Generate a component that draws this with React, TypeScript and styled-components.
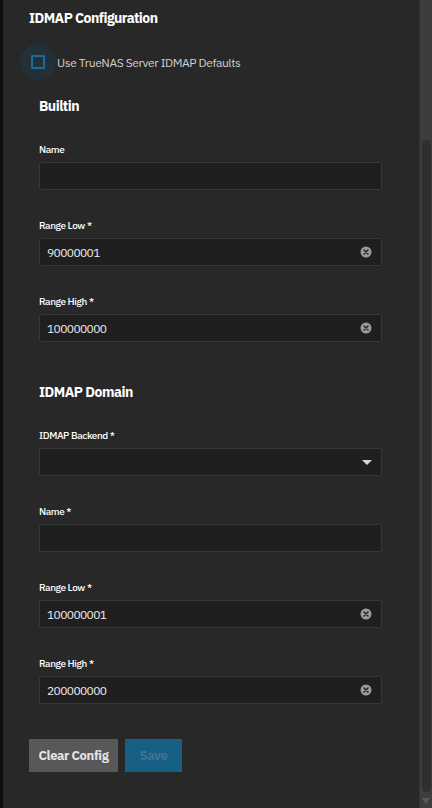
import React from "react";
import styled, { createGlobalStyle } from "styled-components";

const Global = createGlobalStyle`
  html, body { margin: 0; padding: 0; background: #282828; }
  body { font-family: "IBM Plex Sans", Roboto, "Noto Sans", sans-serif; }
  * { box-sizing: border-box; }
`;

const Page = styled.div`
  display: flex;
  width: 432px;
  height: 808px;
  background: #282828;
  border-left: 3px solid #0e0e0e;
  overflow: hidden;
`;

const Content = styled.div`
  flex: 1;
  padding: 8px 0 0 26px;
  display: flex;
  flex-direction: column;
`;

const Title = styled.h2`
  margin: 0;
  font-size: 14px;
  line-height: 20px;
  font-weight: 700;
  color: #ffffff;
  letter-spacing: -0.55px;
`;

const CheckRow = styled.label`
  display: flex;
  align-items: center;
  height: 36px;
  margin: 16px 0 16px -9px;
  gap: 1px;
`;

const Ripple = styled.span`
  width: 36px;
  height: 36px;
  border-radius: 50%;
  background: #233038;
  display: flex;
  align-items: center;
  justify-content: center;
`;

const Box = styled.span`
  width: 14px;
  height: 14px;
  border: 2px solid #1a6a9a;
  border-radius: 1px;
`;

const CheckText = styled.span`
  font-size: 12px;
  color: #d0d0d0;
  letter-spacing: -0.4px;
`;

const Section = styled.section<{ $top?: number }>`
  padding-left: 10px;
  width: 362px;
  margin-top: ${(p) => p.$top ?? 0}px;
`;

const SectionTitle = styled.h3`
  margin: 0 0 27px;
  font-size: 14px;
  line-height: 20px;
  font-weight: 700;
  color: #ffffff;
  letter-spacing: -0.5px;
`;

const Field = styled.div`
  margin-bottom: 29px;
`;

const Label = styled.div`
  font-size: 10px;
  line-height: 14px;
  font-weight: 500;
  color: #ffffff;
  letter-spacing: -0.4px;
  margin-bottom: 5px;
`;

const InputBox = styled.div`
  height: 28px;
  width: 343px;
  background: #1f1f1f;
  border: 1px solid #373737;
  border-radius: 2px;
  display: flex;
  align-items: center;
  padding: 0 9px 0 7px;
`;

const Value = styled.span`
  flex: 1;
  font-size: 12px;
  color: #ececec;
  letter-spacing: -0.6px;
`;

const ClearIcon = () => (
  <svg width="12" height="12" viewBox="0 0 12 12">
    <circle cx="6" cy="6" r="5.5" fill="#9b9b9b" />
    <path d="M4 4 L8 8 M8 4 L4 8" stroke="#1f1f1f" strokeWidth="1.4" strokeLinecap="round" />
  </svg>
);

const Arrow = () => (
  <svg width="10" height="5" viewBox="0 0 10 5">
    <path d="M0 0 H10 L5 5 Z" fill="#d8d8d8" />
  </svg>
);

const Buttons = styled.div`
  display: flex;
  gap: 7px;
  margin-top: 6px;
`;

const Button = styled.button<{ $primary?: boolean }>`
  height: 33px;
  padding: 0;
  border: none;
  border-radius: 0;
  white-space: nowrap;
  font-family: inherit;
  font-size: 13px;
  font-weight: 700;
  letter-spacing: -0.4px;
  background: ${(p) => (p.$primary ? "#175f85" : "#585858")};
  color: ${(p) => (p.$primary ? "#3f7490" : "#e4e4e4")};
  width: ${(p) => (p.$primary ? "57px" : "89px")};
`;

const Scrollbar = styled.div`
  width: 13px;
  background: #3d3d3d;
  border-left: 1px solid #333;
  display: flex;
  flex-direction: column;
  align-items: center;
  padding: 140px 0 4px;
`;

const Thumb = styled.div`
  width: 9px;
  flex: 1;
  margin-left: 1px;
  background: #2f2f2f;
  border-radius: 5px;
`;

const ScrollArrow = styled.div`
  margin-top: 6px;
  width: 0;
  height: 0;
  border-left: 4px solid transparent;
  border-right: 4px solid transparent;
  border-top: 6px solid #5a5a5a;
`;

type F = { label: string; value?: string; kind?: "clear" | "select" };

const Input = ({ label, value, kind }: F) => (
  <Field>
    <Label>{label}</Label>
    <InputBox>
      <Value>{value}</Value>
      {kind === "clear" && <ClearIcon />}
      {kind === "select" && <Arrow />}
    </InputBox>
  </Field>
);

export default function App() {
  return (
    <>
      <Global />
      <Page>
        <Content>
          <Title>IDMAP Configuration</Title>
          <CheckRow>
            <Ripple>
              <Box />
            </Ripple>
            <CheckText>Use TrueNAS Server IDMAP Defaults</CheckText>
          </CheckRow>
          <Section>
            <SectionTitle>Builtin</SectionTitle>
            <Input label="Name" />
            <Input label="Range Low *" value="90000001" kind="clear" />
            <Input label="Range High *" value="100000000" kind="clear" />
          </Section>
          <Section $top={11}>
            <SectionTitle>IDMAP Domain</SectionTitle>
            <Input label="IDMAP Backend *" kind="select" />
            <Input label="Name *" />
            <Input label="Range Low *" value="100000001" kind="clear" />
            <Input label="Range High *" value="200000000" kind="clear" />
          </Section>
          <Buttons>
            <Button>Clear Config</Button>
            <Button $primary>Save</Button>
          </Buttons>
        </Content>
        <Scrollbar>
          <Thumb />
          <ScrollArrow />
        </Scrollbar>
      </Page>
    </>
  );
}
